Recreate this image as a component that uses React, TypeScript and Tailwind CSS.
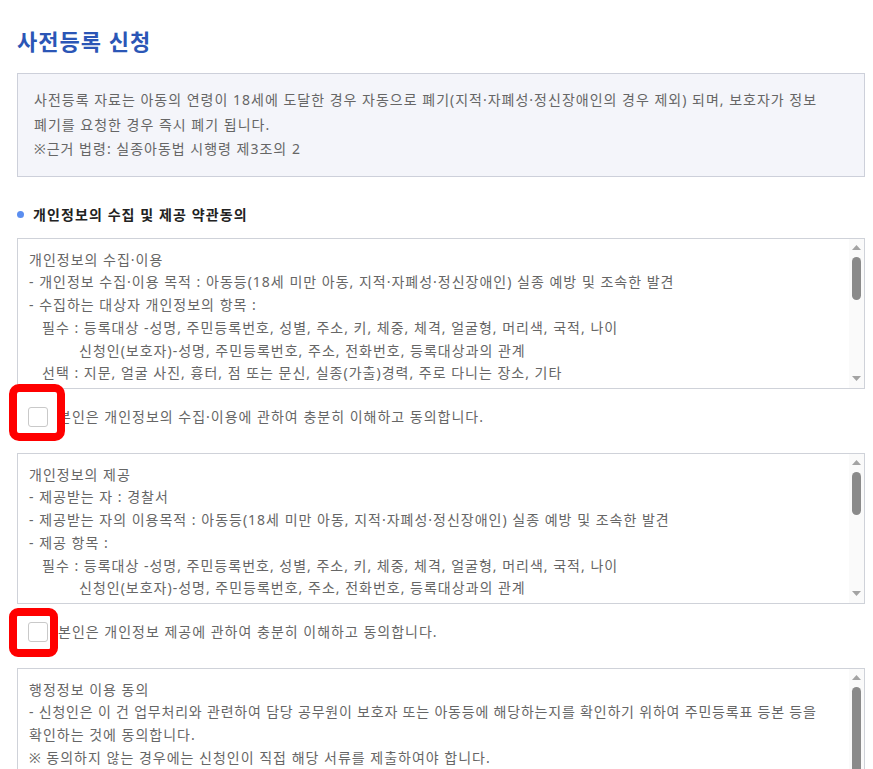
import React from "react";

type Line = { text: string; indent?: number; tight?: boolean };

function ScrollBox({ lines, thumbHeight }: { lines: Line[]; thumbHeight: number }) {
  return (
    <div className="flex h-[151px] border border-[#cfd2d9] bg-white">
      <div className="flex-1 overflow-hidden pl-[11px] pt-[10px] text-[14px] leading-[22.8px] tracking-[1px] text-[#666]">
        {lines.map((l, i) => (
          <div
            key={i}
            className={
              l.indent === 1
                ? "whitespace-nowrap pl-[13px]"
                : l.indent === 2
                ? "whitespace-nowrap pl-[50px]"
                : l.tight
                ? "whitespace-nowrap tracking-[0.8px]"
                : "whitespace-nowrap"
            }
          >
            {l.text}
          </div>
        ))}
      </div>
      <div className="flex w-[15px] flex-col items-center bg-[#fafafa] pt-[6px] pb-[7px]">
        <svg width="9" height="5" viewBox="0 0 9 5" className="shrink-0">
          <polygon points="4.5,0 9,5 0,5" fill="#a3a3a3" />
        </svg>
        <div className="mt-[7px] w-[9px] shrink-0 rounded-full bg-[#8a8a8a]" style={{ height: thumbHeight }} />
        <div className="flex-1" />
        <svg width="9" height="5" viewBox="0 0 9 5" className="shrink-0">
          <polygon points="0,0 9,0 4.5,5" fill="#a3a3a3" />
        </svg>
      </div>
    </div>
  );
}

function CheckRow({ label, frame }: { label: string; frame: 1 | 2 }) {
  return (
    <div className="mt-[18px] mb-[26px] flex h-[20px] items-center pl-[11px]">
      <div className="relative h-[20px] w-[20px] shrink-0">
        <div className="h-[20px] w-[20px] rounded-[3px] border border-[#c9c9c9] bg-white" />
        {frame === 1 ? (
          <div className="absolute left-[-19px] top-[-23px] h-[57px] w-[56px] rounded-[10px] border-[8px] border-[#ff0000]" />
        ) : (
          <div className="absolute left-[-19px] top-[-14px] h-[49px] w-[49px] rounded-[9px] border-[8px] border-[#ff0000]" />
        )}
      </div>
      <span className="ml-[10px] whitespace-nowrap text-[14px] leading-[20px] tracking-[1px] text-[#666]">{label}</span>
    </div>
  );
}

export default function App() {
  const box1: Line[] = [
    { text: "개인정보의 수집·이용" },
    { text: "- 개인정보 수집·이용 목적 : 아동등(18세 미만 아동, 지적·자폐성·정신장애인) 실종 예방 및 조속한 발견" },
    { text: "- 수집하는 대상자 개인정보의 항목 :" },
    { text: "필수 : 등록대상 -성명, 주민등록번호, 성별, 주소, 키, 체중, 체격, 얼굴형, 머리색, 국적, 나이", indent: 1 },
    { text: "신청인(보호자)-성명, 주민등록번호, 주소, 전화번호, 등록대상과의 관계", indent: 2 },
    { text: "선택 : 지문, 얼굴 사진, 흉터, 점 또는 문신, 실종(가출)경력, 주로 다니는 장소, 기타", indent: 1 },
  ];
  const box2: Line[] = [
    { text: "개인정보의 제공" },
    { text: "- 제공받는 자 : 경찰서" },
    { text: "- 제공받는 자의 이용목적 : 아동등(18세 미만 아동, 지적·자폐성·정신장애인) 실종 예방 및 조속한 발견" },
    { text: "- 제공 항목 :" },
    { text: "필수 : 등록대상 -성명, 주민등록번호, 성별, 주소, 키, 체중, 체격, 얼굴형, 머리색, 국적, 나이", indent: 1 },
    { text: "신청인(보호자)-성명, 주민등록번호, 주소, 전화번호, 등록대상과의 관계", indent: 2 },
  ];
  const box3: Line[] = [
    { text: "행정정보 이용 동의" },
    { text: "- 신청인은 이 건 업무처리와 관련하여 담당 공무원이 보호자 또는 아동등에 해당하는지를 확인하기 위하여 주민등록표 등본 등을", tight: true },
    { text: "확인하는 것에 동의합니다." },
    { text: "※ 동의하지 않는 경우에는 신청인이 직접 해당 서류를 제출하여야 합니다." },
  ];

  return (
    <div className="min-h-screen bg-white font-['Noto_Sans','Noto_Sans_CJK_KR',sans-serif]">
      <div className="ml-[17px] w-[848px]">
        <h1 className="pt-[26px] text-[22px] font-bold leading-[30px] tracking-[1px] text-[#2b56b6]">사전등록 신청</h1>
        <div className="mt-[17px] border border-[#cdd0da] bg-[#f4f5fa] px-[16px] py-[14px] text-[14px] leading-[24.5px] tracking-[1px] text-[#666]">
          <div className="whitespace-nowrap">사전등록 자료는 아동의 연령이 18세에 도달한 경우 자동으로 폐기(지적·자폐성·정신장애인의 경우 제외) 되며, 보호자가 정보</div>
          <div>폐기를 요청한 경우 즉시 폐기 됩니다.</div>
          <div>※근거 법령: 실종아동법 시행령 제3조의 2</div>
        </div>
        <div className="mt-[28px] flex h-[20px] items-center">
          <span className="h-[7px] w-[7px] rounded-full bg-[#5b8ef0]" />
          <span className="ml-[9px] text-[14px] font-bold leading-[20px] tracking-[1.1px] text-[#222]">개인정보의 수집 및 제공 약관동의</span>
        </div>
        <div className="mt-[13px]">
          <ScrollBox lines={box1} thumbHeight={43} />
          <CheckRow label="본인은 개인정보의 수집·이용에 관하여 충분히 이해하고 동의합니다." frame={1} />
          <ScrollBox lines={box2} thumbHeight={43} />
          <CheckRow label="본인은 개인정보 제공에 관하여 충분히 이해하고 동의합니다." frame={2} />
          <ScrollBox lines={box3} thumbHeight={110} />
        </div>
      </div>
    </div>
  );
}
